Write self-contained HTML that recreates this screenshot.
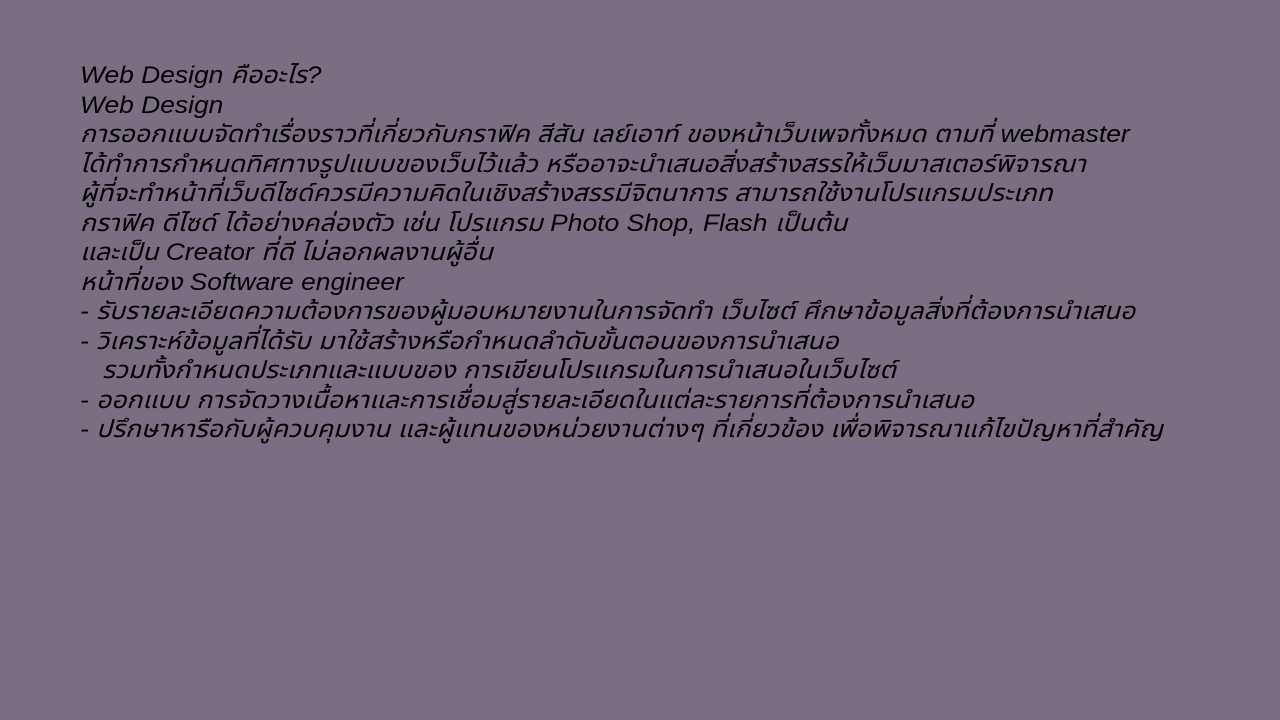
<!DOCTYPE html>
<html><head><meta charset="utf-8"><style>
html,body{margin:0;padding:0;background:#7b6e82;width:1280px;height:720px;overflow:hidden}
.t{position:absolute;left:80px;top:61px;font-family:"Liberation Sans","Noto Sans Thai","Loma","Garuda",sans-serif;font-style:italic;font-size:24px;line-height:29.5px;color:#000;white-space:pre;transform:scaleX(1.1);transform-origin:0 0}
</style></head><body>
<div class="t">Web Design คืออะไร?
Web Design
การออกแบบจัดทำเรื่องราวที่เกี่ยวกับกราฟิค สีสัน เลย์เอาท์ ของหน้าเว็บเพจทั้งหมด ตามที่ webmaster
ได้ทำการกำหนดทิศทางรูปแบบของเว็บไว้แล้ว หรืออาจะนำเสนอสิ่งสร้างสรรให้เว็บมาสเตอร์พิจารณา
ผู้ที่จะทำหน้าที่เว็บดีไซด์ควรมีความคิดในเชิงสร้างสรรมีจิตนาการ สามารถใช้งานโปรแกรมประเภท
กราฟิค ดีไซด์ ได้อย่างคล่องตัว เช่น โปรแกรม Photo Shop, Flash เป็นต้น
และเป็น Creator ที่ดี ไม่ลอกผลงานผู้อื่น
หน้าที่ของ Software engineer
- รับรายละเอียดความต้องการของผู้มอบหมายงานในการจัดทำ เว็บไซต์ ศึกษาข้อมูลสิ่งที่ต้องการนำเสนอ
- วิเคราะห์ข้อมูลที่ได้รับ มาใช้สร้างหรือกำหนดลำดับขั้นตอนของการนำเสนอ
   รวมทั้งกำหนดประเภทและแบบของ การเขียนโปรแกรมในการนำเสนอในเว็บไซต์
- ออกแบบ การจัดวางเนื้อหาและการเชื่อมสู่รายละเอียดในแต่ละรายการที่ต้องการนำเสนอ
- ปรึกษาหารือกับผู้ควบคุมงาน และผู้แทนของหน่วยงานต่างๆ ที่เกี่ยวข้อง เพื่อพิจารณาแก้ไขปัญหาที่สำคัญ</div>
</body></html>
